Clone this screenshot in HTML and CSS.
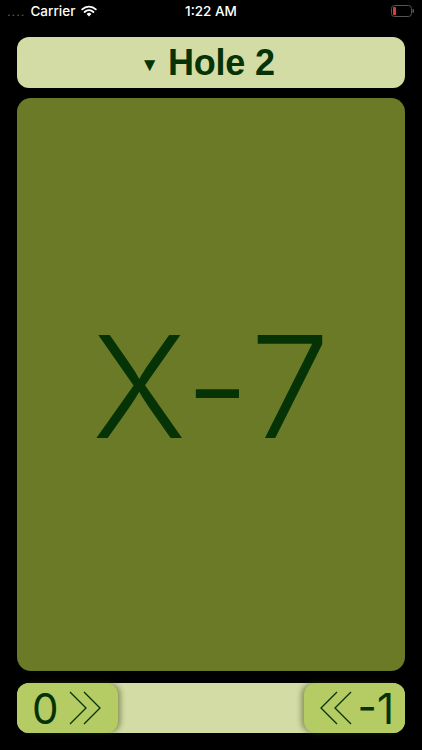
FILE: index.html
```html
<!DOCTYPE html>
<html>
<head>
<meta charset="utf-8">
<link rel="stylesheet" href="styles.css">
</head>
<body>
<div class="screen">
  <div class="status">
    <div class="st-left">
      <span class="dots">....</span>
      <span class="carrier">Carrier</span>
      <svg class="wifi" width="16" height="12" viewBox="0 0 16 12">
        <path d="M8 11.5 L5.6 9 A3.4 3.4 0 0 1 10.4 9 Z" fill="#fff"/>
        <path d="M3.6 7 A6.2 6.2 0 0 1 12.4 7" stroke="#fff" stroke-width="1.8" fill="none" stroke-linecap="round"/>
        <path d="M1.2 4.4 A9.6 9.6 0 0 1 14.8 4.4" stroke="#fff" stroke-width="1.8" fill="none" stroke-linecap="round"/>
      </svg>
    </div>
    <div class="st-time">1:22 AM</div>
    <div class="st-right">
      <svg width="24" height="12" viewBox="0 0 24 12">
        <rect x="0.5" y="0.5" width="20" height="11" rx="3" fill="none" stroke="#555" stroke-width="1"/>
        <rect x="2" y="2" width="3" height="8" rx="1" fill="#e8343a"/>
        <rect x="21.5" y="4" width="1.5" height="4" rx="0.7" fill="#555"/>
      </svg>
    </div>
  </div>
  <div class="header"><span class="tri">&#9660;</span><span class="title">Hole 2</span></div>
  <div class="card"><span class="score">X-7</span></div>
  <div class="bottom">
    <div class="btn btn-left">
      <span class="num">0</span>
      <svg width="36" height="34" viewBox="0 0 36 34">
        <path d="M2 1 L18 17 L2 33 M16 1 L32 17 L16 33" stroke="#053305" stroke-width="1.3" fill="none"/>
      </svg>
    </div>
    <div class="btn btn-right">
      <svg width="36" height="34" viewBox="0 0 36 34">
        <path d="M18 1 L2 17 L18 33 M32 1 L16 17 L32 33" stroke="#053305" stroke-width="1.3" fill="none"/>
      </svg>
      <span class="num">-1</span>
    </div>
  </div>
</div>
</body>
</html>
```
FILE: styles.css
```css
html, body {
  margin: 0;
  padding: 0;
  background: #000;
}
* { box-sizing: border-box; }
.screen {
  width: 422px;
  height: 750px;
  background: #000;
  display: flex;
  flex-direction: column;
  font-family: "Liberation Sans", Arial, sans-serif;
  overflow: hidden;
}
.status {
  height: 22px;
  display: flex;
  align-items: center;
  color: #fff;
  font-size: 14px;
}
.st-left {
  display: flex;
  align-items: center;
  padding-left: 7px;
  gap: 5px;
  flex: 1;
}
.dots {
  color: #666;
  font-size: 13px;
  letter-spacing: 1px;
}
.carrier {
  font-family: "Inter", sans-serif;
  font-size: 13.5px;
  font-weight: 500;
}
.wifi { margin-left: 1px; }
.st-time {
  font-family: "Inter", sans-serif;
  font-size: 13.5px;
  font-weight: 500;
  flex: 1;
  text-align: center;
}
.st-right {
  flex: 1;
  display: flex;
  justify-content: flex-end;
  padding-right: 7px;
}
.header {
  margin: 15px 17px 0 17px;
  height: 51px;
  background: #d4dca6;
  border-radius: 12px;
  display: flex;
  justify-content: center;
  align-items: center;
  color: #053305;
  padding-right: 7px;
}
.tri {
  font-size: 19px;
  margin-right: 9px;
  margin-top: 4px;
}
.title {
  font-size: 36px;
  font-weight: bold;
  letter-spacing: -0.2px;
}
.card {
  margin: 10px 17px 0 17px;
  height: 573px;
  background: #6b7a27;
  border-radius: 14px;
  display: flex;
  justify-content: center;
  align-items: center;
}
.score {
  font-family: "Inter", sans-serif;
  font-size: 142px;
  font-weight: 300;
  letter-spacing: 4px;
  padding-left: 4px;
  color: #053305;
  margin-top: 2px;
}
.bottom {
  margin: 12px 17px 0 17px;
  height: 50px;
  background: #d4dca6;
  border-radius: 12px;
  display: flex;
  justify-content: space-between;
}
.btn {
  width: 101px;
  background: #b4cc63;
  border-radius: 12px;
  display: flex;
  align-items: center;
  color: #053305;
}
.btn-left {
  box-shadow: 3px 0 5px rgba(60, 70, 20, 0.45);
  padding-left: 15px;
  gap: 9px;
}
.btn-right {
  box-shadow: -3px 0 5px rgba(60, 70, 20, 0.45);
  justify-content: flex-end;
  padding-right: 11px;
  gap: 3px;
}
.btn .num {
  font-family: "Inter", sans-serif;
  font-size: 42px;
  font-weight: 400;
}
```
